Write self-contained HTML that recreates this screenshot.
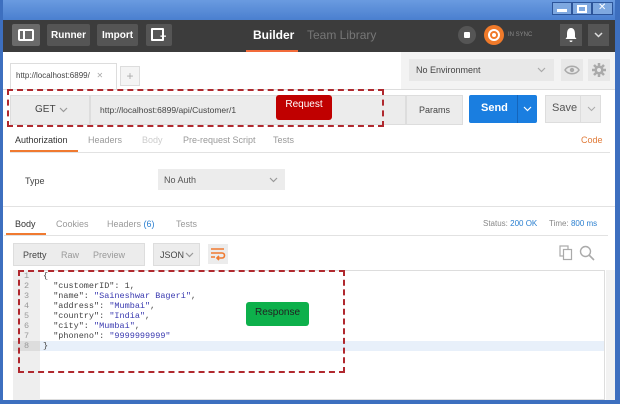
<!DOCTYPE html>
<html><head><style>
*{margin:0;padding:0;box-sizing:border-box}
body{width:620px;height:404px;overflow:hidden;background:#fff;font-family:"Liberation Sans",sans-serif;position:relative}
.a{position:absolute}
.t{position:absolute;white-space:nowrap}
.btn{position:absolute;background:#555;border-radius:2px;color:#fff;font-size:10px;font-weight:bold;text-align:center}
.mono{font-family:"Liberation Mono",monospace;font-size:8.5px;color:#444}
.s{color:#3a3ab0}
</style></head><body>
<div class="a" style="left:0;top:0;width:620px;height:20px;background:linear-gradient(#6a9be0,#4a7fcf)"></div>
<div class="a" style="left:0;top:0;width:3px;height:404px;background:#3d6fbf"></div>
<div class="a" style="left:615px;top:0;width:5px;height:404px;background:#3d6fbf"></div>
<div class="a" style="left:0;top:400px;width:620px;height:4px;background:#3d6fbf"></div>
<div class="a" style="left:552px;top:2px;width:20px;height:13px;background:#7ea8e0;border:1px solid #2d559a"></div>
<div class="a" style="left:572px;top:2px;width:20px;height:13px;background:#7ea8e0;border:1px solid #2d559a"></div>
<div class="a" style="left:592px;top:2px;width:21px;height:13px;background:#7ea8e0;border:1px solid #2d559a"></div>
<div class="a" style="left:557px;top:9px;width:10px;height:3px;background:#fff"></div>
<div class="a" style="left:577px;top:5px;width:10px;height:8px;border:2px solid #fff"></div>
<div class="t" style="left:598px;top:2px;font-size:10px;color:#fff">✕</div>
<div class="a" style="left:3px;top:20px;width:612px;height:32px;background:#3c3c3c"></div>
<div class="btn" style="left:12px;top:24px;width:28px;height:22px;background:#6a6a6a"><div class="a" style="left:6px;top:5px;width:16px;height:12px;border:2px solid #fff;border-radius:2px"></div><div class="a" style="left:11px;top:5px;width:2px;height:12px;background:#fff"></div></div>
<div class="btn" style="left:47px;top:24px;width:43px;height:22px;line-height:23px">Runner</div>
<div class="btn" style="left:97px;top:24px;width:41px;height:22px;line-height:23px">Import</div>
<div class="btn" style="left:146px;top:24px;width:26px;height:22px"><div class="a" style="left:5px;top:4px;width:13px;height:13px;border:2px solid #fff;border-radius:1px"></div><div class="t" style="left:14px;top:7px;font-size:11px">+</div></div>
<div class="t" style="left:253px;top:28px;font-size:12px;color:#fff;font-weight:bold">Builder</div>
<div class="a" style="left:246px;top:50px;width:52px;height:2px;background:#f26b3a"></div>
<div class="t" style="left:307px;top:28px;font-size:12px;color:#777">Team Library</div>
<div class="a" style="left:458px;top:26px;width:18px;height:18px;border-radius:50%;background:#555"></div>
<div class="a" style="left:464px;top:32px;width:6px;height:6px;background:#fff;border-radius:1px"></div>
<div class="a" style="left:484px;top:25px;width:20px;height:20px;border-radius:50%;background:#f07a2a"></div>
<div class="a" style="left:488px;top:29px;width:12px;height:12px;border-radius:50%;border:2px solid #fff"></div>
<div class="a" style="left:492px;top:33px;width:4px;height:4px;border-radius:50%;background:#fff"></div>
<div class="t" style="left:508px;top:32px;font-size:6px;color:#888">IN SYNC</div>
<div class="a" style="left:560px;top:24px;width:22px;height:22px;background:#555"></div>
<svg class="a" style="left:564px;top:27px" width="14" height="16" viewBox="0 0 14 16"><path d="M7 1C4 1 3 4 3 7V10L1.5 12H12.5L11 10V7C11 4 10 1 7 1Z M5.5 13.5H8.5A1.5 1.5 0 0 1 5.5 13.5Z" fill="#fff"/></svg>
<div class="a" style="left:588px;top:24px;width:21px;height:22px;background:#555"></div>
<svg class="a" style="left:594px;top:32px" width="9" height="6"><path d="M1 1L4.5 4.5L8 1" stroke="#ddd" stroke-width="1.5" fill="none"/></svg>
<div class="a" style="left:401px;top:52px;width:214px;height:38px;background:#f3f3f3"></div>
<div class="a" style="left:10px;top:63px;width:107px;height:26px;border:1px solid #ddd;border-bottom:none;background:#fff"></div>
<div class="t" style="left:16px;top:71px;font-size:8px;color:#444">http://localhost:6899/ &nbsp;&nbsp;<span style="color:#aaa">✕</span></div>
<div class="a" style="left:120px;top:66px;width:20px;height:20px;border:1px solid #ddd;background:#f4f4f4;color:#aaa;font-size:12px;text-align:center;line-height:18px">+</div>
<div class="a" style="left:3px;top:89px;width:612px;height:1px;background:#ddd"></div>
<div class="a" style="left:409px;top:59px;width:145px;height:22px;background:#e8e8e8"></div>
<div class="t" style="left:416px;top:65px;font-size:9px;color:#444">No Environment</div>
<svg class="a" style="left:537px;top:67px" width="9" height="6"><path d="M1 1L4.5 4.5L8 1" stroke="#aaa" stroke-width="1.2" fill="none"/></svg>
<div class="a" style="left:561px;top:59px;width:22px;height:22px;background:#e8e8e8"></div>
<svg class="a" style="left:564px;top:64px" width="16" height="12"><path d="M1 6C4 1 12 1 15 6C12 11 4 11 1 6Z" fill="none" stroke="#aaa" stroke-width="1.5"/><circle cx="8" cy="6" r="2.2" fill="#aaa"/></svg>
<div class="a" style="left:588px;top:59px;width:22px;height:22px;background:#e8e8e8"></div>
<svg class="a" style="left:591px;top:62px" width="16" height="16" viewBox="0 0 16 16"><g stroke="#aaa" stroke-width="2.5"><path d="M8 1V15M1 8H15M3 3L13 13M13 3L3 13"/></g><circle cx="8" cy="8" r="4.5" fill="#aaa"/><circle cx="8" cy="8" r="2" fill="#e8e8e8"/></svg>
<div class="a" style="left:10px;top:95px;width:80px;height:30px;background:#ececec;border:1px solid #ddd"></div>
<div class="t" style="left:35px;top:104px;font-size:10px;color:#444">GET</div>
<svg class="a" style="left:59px;top:107px" width="9" height="6"><path d="M1 1L4.5 4.5L8 1" stroke="#999" stroke-width="1.2" fill="none"/></svg>
<div class="a" style="left:90px;top:95px;width:316px;height:30px;background:#ececec;border:1px solid #ddd"></div>
<div class="t" style="left:100px;top:105px;font-size:8.5px;color:#444">http://localhost:6899/api/Customer/1</div>
<div class="a" style="left:406px;top:95px;width:57px;height:30px;background:#ececec;border:1px solid #ddd;font-size:9px;color:#444;text-align:center;line-height:28px">Params</div>
<div class="a" style="left:469px;top:95px;width:68px;height:28px;background:#1a7ee0;border-radius:2px"></div>
<div class="t" style="left:481px;top:102px;font-size:11px;color:#fff;font-weight:bold">Send</div>
<div class="a" style="left:517px;top:95px;width:1px;height:28px;background:#1565bb"></div>
<svg class="a" style="left:523px;top:106px" width="9" height="6"><path d="M1 1L4.5 4.5L8 1" stroke="#fff" stroke-width="1.2" fill="none"/></svg>
<div class="a" style="left:545px;top:95px;width:56px;height:28px;background:#ececec;border:1px solid #ddd"></div>
<div class="t" style="left:552px;top:102px;font-size:11px;color:#555">Save</div>
<div class="a" style="left:580px;top:95px;width:1px;height:28px;background:#ddd"></div>
<svg class="a" style="left:587px;top:106px" width="9" height="6"><path d="M1 1L4.5 4.5L8 1" stroke="#aaa" stroke-width="1" fill="none"/></svg>
<div class="a" style="left:7px;top:89px;width:377px;height:38px;border:2px dashed #b0282e"></div>
<div class="a" style="left:276px;top:95px;width:56px;height:25px;background:#c00000;border-radius:3px;color:#fff;font-size:10px;text-align:center;line-height:20px">Request</div>
<div class="t" style="left:15px;top:135px;font-size:9px;color:#333">Authorization</div>
<div class="t" style="left:88px;top:135px;font-size:9px;color:#999">Headers</div>
<div class="t" style="left:142px;top:135px;font-size:9px;color:#ccc">Body</div>
<div class="t" style="left:183px;top:135px;font-size:9px;color:#999">Pre-request Script</div>
<div class="t" style="left:273px;top:135px;font-size:9px;color:#999">Tests</div>
<div class="t" style="left:581px;top:135px;font-size:9px;color:#e07b39">Code</div>
<div class="a" style="left:10px;top:152px;width:600px;height:1px;background:#e2e2e2"></div>
<div class="a" style="left:10px;top:150px;width:68px;height:2px;background:#f07a30"></div>
<div class="t" style="left:25px;top:176px;font-size:9px;color:#444">Type</div>
<div class="a" style="left:158px;top:169px;width:127px;height:21px;background:#ececec"></div>
<div class="t" style="left:164px;top:175px;font-size:9px;color:#555">No Auth</div>
<svg class="a" style="left:269px;top:177px" width="9" height="6"><path d="M1 1L4.5 4.5L8 1" stroke="#999" stroke-width="1.2" fill="none"/></svg>
<div class="a" style="left:3px;top:206px;width:612px;height:1px;background:#e2e2e2"></div>
<div class="t" style="left:15px;top:219px;font-size:9px;color:#333">Body</div>
<div class="t" style="left:56px;top:219px;font-size:9px;color:#999">Cookies</div>
<div class="t" style="left:107px;top:219px;font-size:9px;color:#999">Headers <span style="color:#2a7fd0">(6)</span></div>
<div class="t" style="left:176px;top:219px;font-size:9px;color:#999">Tests</div>
<div class="t" style="left:483px;top:219px;font-size:8px;color:#888">Status: <span style="color:#2a7fd0">200 OK</span></div>
<div class="t" style="left:549px;top:219px;font-size:8px;color:#888">Time: <span style="color:#2a7fd0">800 ms</span></div>
<div class="a" style="left:4px;top:235px;width:604px;height:1px;background:#e2e2e2"></div>
<div class="a" style="left:6px;top:233px;width:40px;height:2px;background:#f07a30"></div>
<div class="a" style="left:13px;top:243px;width:132px;height:23px;background:#ececec;border:1px solid #ddd"></div>
<div class="t" style="left:23px;top:250px;font-size:9px;color:#444">Pretty <span style="color:#999;margin-left:12px">Raw</span><span style="color:#999;margin-left:14px">Preview</span></div>
<div class="a" style="left:153px;top:243px;width:47px;height:23px;background:#ececec;border:1px solid #ddd"></div>
<div class="t" style="left:160px;top:250px;font-size:9px;color:#444">JSON</div>
<svg class="a" style="left:185px;top:252px" width="9" height="6"><path d="M1 1L4.5 4.5L8 1" stroke="#999" stroke-width="1.2" fill="none"/></svg>
<div class="a" style="left:208px;top:244px;width:20px;height:20px;background:#ececec"></div>
<svg class="a" style="left:210px;top:247px" width="16" height="14"><path d="M1 2H14M1 6H12A2.5 2.5 0 0 1 12 11H8M1 10H5M9 9L7 11L9 13" stroke="#f07a30" stroke-width="1.6" fill="none"/></svg>
<svg class="a" style="left:559px;top:245px" width="14" height="16"><rect x="1" y="1" width="8" height="10" fill="none" stroke="#aaa" stroke-width="1.2"/><rect x="4.5" y="4.5" width="8" height="10" fill="#fff" stroke="#aaa" stroke-width="1.2"/></svg>
<svg class="a" style="left:579px;top:245px" width="16" height="16"><circle cx="6.5" cy="6.5" r="5" fill="none" stroke="#aaa" stroke-width="1.4"/><path d="M10 10L15 15" stroke="#aaa" stroke-width="1.6"/></svg>
<div class="a" style="left:13px;top:270px;width:592px;height:130px;border:1px solid #ddd"></div>
<div class="a" style="left:13px;top:270px;width:27px;height:130px;background:#eee"></div>
<div class="a" style="left:40px;top:341px;width:564px;height:10px;background:#e8f0fa"></div>
<div class="a" style="left:13px;top:341px;width:27px;height:10px;background:#ddd"></div>
<div class="a mono" style="left:24px;top:271px;line-height:10px;color:#999">1<br>2<br>3<br>4<br>5<br>6<br>7<br>8</div>
<div class="a mono" style="left:43px;top:271px;line-height:10px;white-space:pre">{
  "customerID": 1,
  "name": <span class="s">"Saineshwar Bageri"</span>,
  "address": <span class="s">"Mumbai"</span>,
  "country": <span class="s">"India"</span>,
  "city": <span class="s">"Mumbai"</span>,
  "phoneno": <span class="s">"9999999999"</span>
}</div>
<div class="a" style="left:18px;top:270px;width:327px;height:103px;border:2px dashed #b0282e"></div>
<div class="a" style="left:246px;top:302px;width:63px;height:24px;background:#0db04b;border-radius:3px;color:#222;font-size:10px;text-align:center;line-height:22px">Response</div>
<div class="a" style="left:606px;top:270px;width:9px;height:130px;background:#f2f2f2"></div>
</body></html>
